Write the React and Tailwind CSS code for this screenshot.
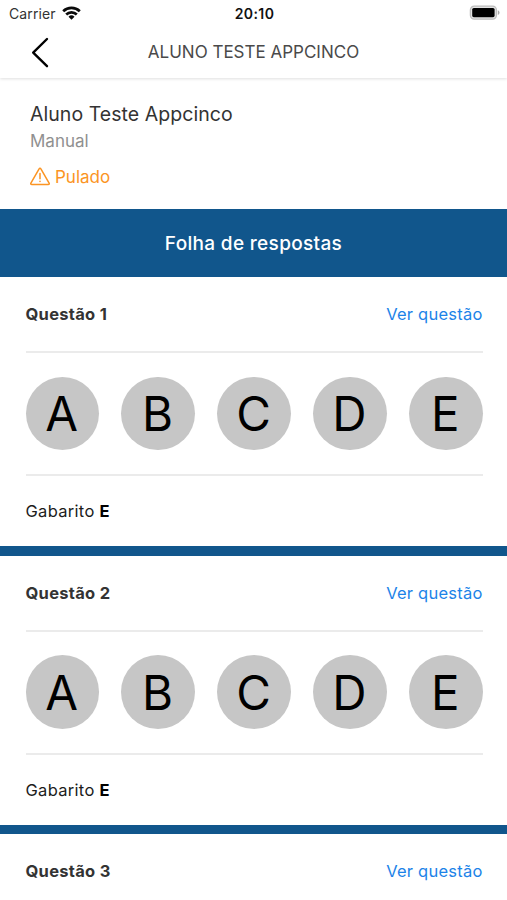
const LETTERS = ["A", "B", "C", "D", "E"];

function StatusBar() {
  return (
    <div className="grid h-[27px] grid-cols-3 items-center pl-[9px] pr-[7px]">
      <div className="flex items-center gap-[6px]">
        <span className="text-[14px] tracking-[0.1px] text-[#333]">Carrier</span>
        <svg className="-mt-px" width="19" height="14" viewBox="0 0 19 14" fill="none" stroke="#0a0a0a" strokeWidth="2.7">
          <path d="M1.2 5.2a11.9 11.9 0 0 1 16.6 0" />
          <path d="M4.2 8.5a7.6 7.6 0 0 1 10.6 0" />
          <path d="M9.5 13.7 6.5 10.8a4.3 4.3 0 0 1 6 0Z" fill="#0a0a0a" stroke="none" />
        </svg>
      </div>
      <span className="text-center text-[14px] font-semibold tracking-[0.4px] text-[#111]">20:10</span>
      <svg className="-mt-px justify-self-end" width="31" height="16" viewBox="0 0 31 16">
        <rect x="1.4" y="1.1" width="26" height="13" rx="3.8" fill="#e4e4e4" stroke="#bdbdbd" strokeWidth="1.3" />
        <rect x="3.2" y="3" width="22.4" height="9.2" rx="1.6" fill="#000" />
        <path d="M28.8 5.2c2.3.8 2.3 4 0 4.8Z" fill="#aaa" />
      </svg>
    </div>
  );
}

function QuestionHeader({ number }) {
  return (
    <div className="flex h-[74px] shrink-0 items-center justify-between pt-px">
      <h2 className="text-[16.5px] font-bold tracking-[0.28px] text-[#333]">Questão {number}</h2>
      <a className="text-[16.5px] tracking-[0.23px] text-[#1c83e8]">Ver questão</a>
    </div>
  );
}

function Question({ number }) {
  return (
    <section className="shrink-0">
      <div className="pl-[25.5px] pr-[24.5px]">
        <QuestionHeader number={number} />
        <div className="flex h-[125px] items-center justify-between border-y-2 border-[#ebebeb]">
          {LETTERS.map((letter) => (
            <div
              key={letter}
              className="flex size-[73.5px] items-center justify-center rounded-full bg-[#c6c6c6] pr-px pt-px text-[47.5px] leading-none text-black"
            >
              {letter}
            </div>
          ))}
        </div>
        <p className="flex h-[70px] items-center pt-px text-[16.5px] tracking-[0.3px] text-[#1c1c1c]">
          <span className="whitespace-pre">Gabarito </span>
          <strong className="font-bold text-black">E</strong>
        </p>
      </div>
      <div className="h-[9.5px] bg-[#11568c]" />
    </section>
  );
}

export default function App() {
  return (
    <div className="flex h-[900px] w-full flex-col overflow-hidden bg-white font-['Inter',sans-serif]">
      <header className="h-[78px] shrink-0 shadow-[0_1px_3px_rgba(0,0,0,0.13)]">
        <StatusBar />
        <div className="grid h-[51px] grid-cols-[1fr_auto_1fr] items-center">
          <svg className="ml-[31px]" width="19" height="32" viewBox="0 0 19 32" fill="none" stroke="#000" strokeWidth="2.4" strokeLinecap="round" strokeLinejoin="round">
            <path d="M16 2 2.2 15.6 16 29.2" />
          </svg>
          <h1 className="pt-px text-[17px] text-[#4a4a4a]">ALUNO TESTE APPCINCO</h1>
        </div>
      </header>
      <div className="h-[131px] shrink-0 pl-[30px] pt-[22px]">
        <p className="text-[19.5px] leading-[28px] tracking-[0.05px] text-[#333]">Aluno Teste Appcinco</p>
        <p className="text-[17px] leading-[26px] text-[#909090]">Manual</p>
        <div className="mt-[10px] flex items-center gap-[5px] text-[#fb9423]">
          <svg className="mb-[2px]" width="20" height="19" viewBox="0 0 20 19" fill="none" stroke="currentColor" strokeWidth="1.5" strokeLinecap="round" strokeLinejoin="round">
            <path d="M9.1 1.9.9 16.1c-.4.8 0 1.5.9 1.5h16.4c.9 0 1.3-.7.9-1.5L10.9 1.9c-.4-.8-1.4-.8-1.8 0Z" />
            <path d="M10 6.6v5.1M10 14.3v.2" />
          </svg>
          <span className="text-[17px] leading-[26px]">Pulado</span>
        </div>
      </div>
      <div className="flex h-[68px] shrink-0 items-center justify-center bg-[#11568c] pt-[2px] text-[19px] font-medium tracking-[0.33px] text-white">
        Folha de respostas
      </div>
      <Question number={1} />
      <Question number={2} />
      <div className="pl-[25.5px] pr-[24.5px]">
        <QuestionHeader number={3} />
      </div>
    </div>
  );
}
